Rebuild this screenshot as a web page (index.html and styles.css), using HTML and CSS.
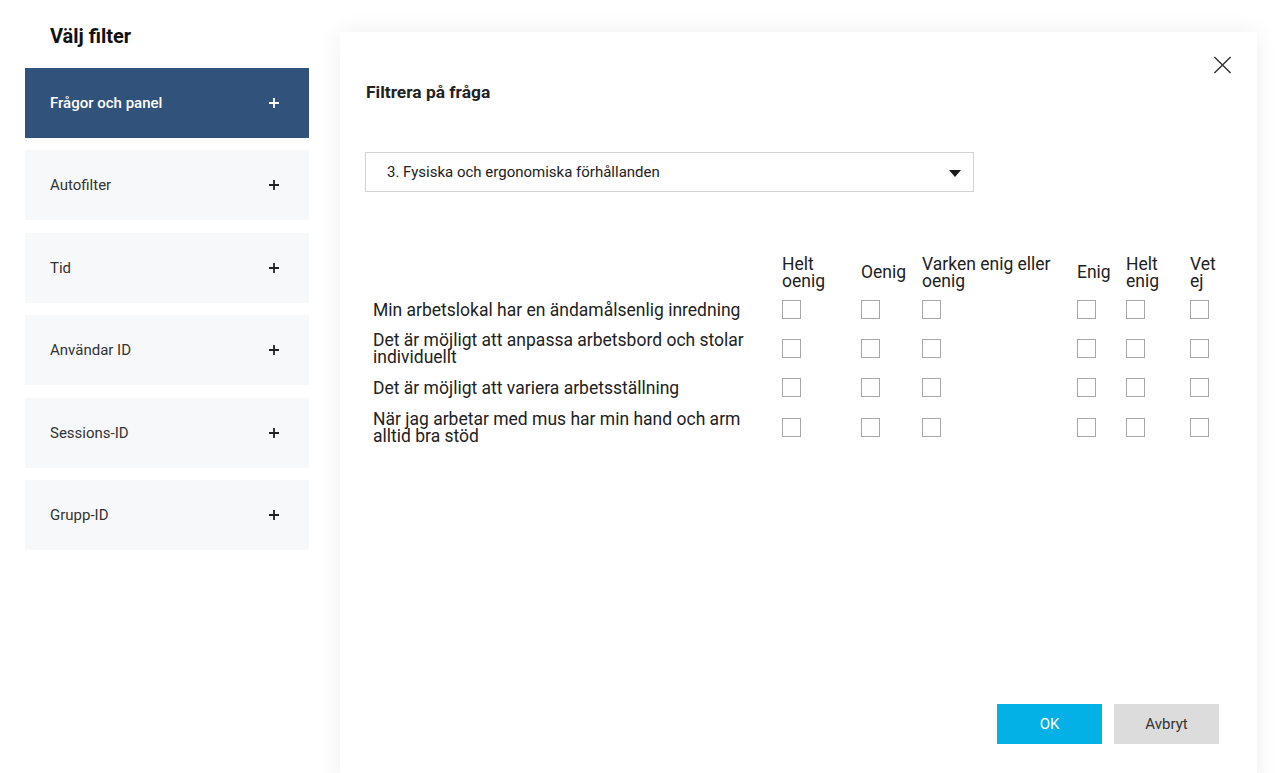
FILE: index.html
```html
<!DOCTYPE html>
<html lang="sv">
<head>
<meta charset="utf-8">
<title>Välj filter</title>
<link rel="stylesheet" href="styles.css">
</head>
<body>
<div class="page">
  <aside class="sidebar">
    <h2 class="sidebar-title">Välj filter</h2>
    <ul class="filter-list">
      <li class="filter-item active"><span>Frågor och panel</span><svg class="plus" viewBox="0 0 12 12"><path d="M6 1v10M1 6h10"/></svg></li>
      <li class="filter-item"><span>Autofilter</span><svg class="plus" viewBox="0 0 12 12"><path d="M6 1v10M1 6h10"/></svg></li>
      <li class="filter-item"><span>Tid</span><svg class="plus" viewBox="0 0 12 12"><path d="M6 1v10M1 6h10"/></svg></li>
      <li class="filter-item"><span>Användar ID</span><svg class="plus" viewBox="0 0 12 12"><path d="M6 1v10M1 6h10"/></svg></li>
      <li class="filter-item"><span>Sessions-ID</span><svg class="plus" viewBox="0 0 12 12"><path d="M6 1v10M1 6h10"/></svg></li>
      <li class="filter-item"><span>Grupp-ID</span><svg class="plus" viewBox="0 0 12 12"><path d="M6 1v10M1 6h10"/></svg></li>
    </ul>
  </aside>
  <main class="panel">
    <button class="close" aria-label="Stäng"><svg viewBox="0 0 20 20"><path d="M1 1l18 18M19 1L1 19"/></svg></button>
    <h3 class="panel-title">Filtrera på fråga</h3>
    <div class="select">
      <span>3. Fysiska och ergonomiska förhållanden</span>
      <svg class="caret" viewBox="0 0 12 7"><path d="M0 0h12L6 7z"/></svg>
    </div>
    <div class="matrix">
      <div class="hcell"></div>
      <div class="hcell">Helt<br>oenig</div>
      <div class="hcell">Oenig</div>
      <div class="hcell">Varken enig eller<br>oenig</div>
      <div class="hcell">Enig</div>
      <div class="hcell">Helt<br>enig</div>
      <div class="hcell">Vet<br>ej</div>

      <div class="q">Min arbetslokal har en ändamålsenlig inredning</div>
      <div class="c"><span class="box"></span></div><div class="c"><span class="box"></span></div><div class="c"><span class="box"></span></div><div class="c"><span class="box"></span></div><div class="c"><span class="box"></span></div><div class="c"><span class="box"></span></div>

      <div class="q">Det är möjligt att anpassa arbetsbord och stolar individuellt</div>
      <div class="c"><span class="box"></span></div><div class="c"><span class="box"></span></div><div class="c"><span class="box"></span></div><div class="c"><span class="box"></span></div><div class="c"><span class="box"></span></div><div class="c"><span class="box"></span></div>

      <div class="q">Det är möjligt att variera arbetsställning</div>
      <div class="c"><span class="box"></span></div><div class="c"><span class="box"></span></div><div class="c"><span class="box"></span></div><div class="c"><span class="box"></span></div><div class="c"><span class="box"></span></div><div class="c"><span class="box"></span></div>

      <div class="q">När jag arbetar med mus har min hand och arm alltid bra stöd</div>
      <div class="c"><span class="box"></span></div><div class="c"><span class="box"></span></div><div class="c"><span class="box"></span></div><div class="c"><span class="box"></span></div><div class="c"><span class="box"></span></div><div class="c"><span class="box"></span></div>
    </div>
    <div class="actions">
      <button class="btn btn-ok">OK</button>
      <button class="btn btn-cancel">Avbryt</button>
    </div>
  </main>
</div>
</body>
</html>
```

FILE: styles.css
```css
* { box-sizing: border-box; }
html, body { margin: 0; padding: 0; background: #fff; }
body {
  font-family: Roboto, "Liberation Sans", Arial, sans-serif;
  color: #222;
  overflow: hidden;
  height: 773px;
}
.page {
  display: flex;
  align-items: flex-start;
}
.sidebar {
  width: 284px;
  margin-left: 25px;
  padding-top: 24px;
}
.sidebar-title {
  margin: 0 0 20px 0;
  padding-left: 25px;
  font-size: 20px;
  line-height: 24px;
  font-weight: 700;
  color: #111;
}
.filter-list {
  list-style: none;
  margin: 0;
  padding: 0;
  display: flex;
  flex-direction: column;
  gap: 12.4px;
}
.filter-item {
  height: 70px;
  display: flex;
  align-items: center;
  justify-content: space-between;
  padding: 0 29px 0 25px;
  background: #f7f8fa;
  font-size: 15px;
  color: #333;
}
.filter-item.active {
  background: #31537b;
  color: #fff;
  font-weight: 500;
}
.plus {
  width: 12px;
  height: 12px;
  stroke: #222;
  stroke-width: 1.8;
  fill: none;
}
.filter-item.active .plus { stroke: #fff; }

.panel {
  position: relative;
  margin-left: 31px;
  margin-top: 32px;
  width: 917px;
  height: 760px;
  background: #fff;
  box-shadow: 0 0 22px rgba(0, 0, 0, 0.07);
  padding: 49px 38px 48px 26px;
  display: flex;
  flex-direction: column;
  align-items: flex-start;
}
.close {
  position: absolute;
  top: 24px;
  right: 24px;
  width: 21px;
  height: 19px;
  padding: 0;
  border: 0;
  background: none;
}
.close svg {
  width: 19px;
  height: 18px;
  stroke: #333;
  stroke-width: 1.6;
  fill: none;
}
.panel-title {
  margin: 0;
  padding-top: 1px;
  font-size: 17.4px;
  line-height: 20px;
  font-weight: 700;
  color: #222;
}
.select {
  margin-top: 50px;
  margin-left: -1px;
  width: 609px;
  height: 40px;
  border: 1px solid #d3d3d3;
  display: flex;
  align-items: center;
  justify-content: space-between;
  padding: 0 12px 0 21px;
  font-size: 15px;
  color: #222;
}
.caret {
  width: 12px;
  height: 7px;
  fill: #1a1a1a;
  margin-top: 2px;
}
.matrix {
  margin-top: 62.5px;
  margin-left: 7px;
  display: grid;
  grid-template-columns: 409px 79px 61px 155px 49px 64px 40px;
  grid-template-rows: 36px repeat(4, 39.3px);
  font-size: 17.5px;
  line-height: 17px;
  color: #222;
}
.hcell {
  display: flex;
  align-items: center;
}
.q {
  display: flex;
  align-items: center;
  padding-right: 30px;
}
.c {
  display: flex;
  align-items: center;
}
.box {
  width: 19px;
  height: 19px;
  border: 1px solid #a7a7a7;
  background: #fff;
  margin-top: -2px;
}
.actions {
  margin-top: auto;
  align-self: flex-end;
  display: flex;
  gap: 12px;
}
.btn {
  width: 105px;
  height: 40px;
  border: 0;
  font-family: Roboto, "Liberation Sans", Arial, sans-serif;
  font-size: 15px;
  cursor: pointer;
}
.btn-ok {
  background: #03b1e6;
  color: #fff;
}
.btn-cancel {
  background: #dcdcdc;
  color: #333;
}
```
